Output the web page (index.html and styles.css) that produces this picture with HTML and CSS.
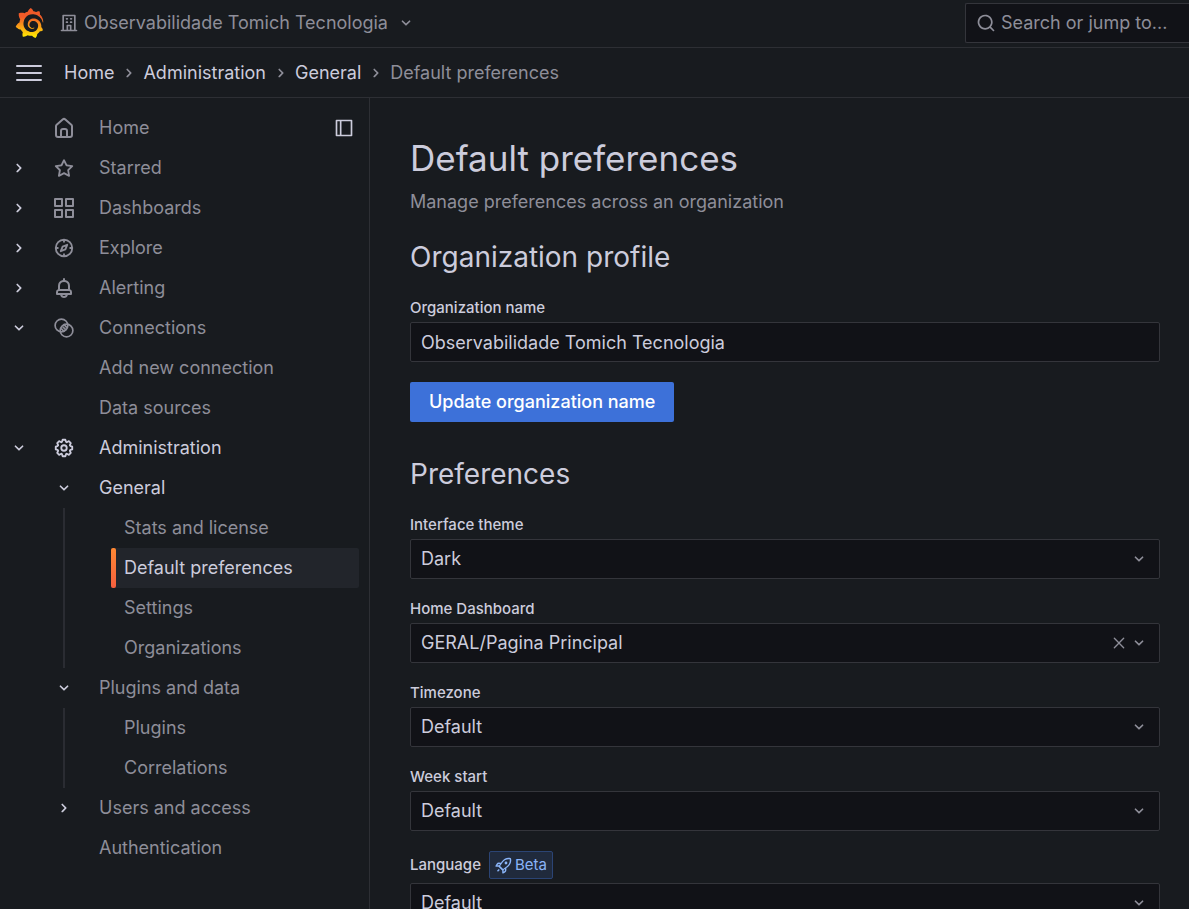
FILE: index.html
```html
<!DOCTYPE html>
<html lang="en">
<head>
<meta charset="utf-8">
<title>Default preferences - General - Administration - Grafana</title>
<link rel="stylesheet" href="styles.css">
</head>
<body>
<svg class="sprite" aria-hidden="true">
  <symbol id="right" viewBox="0 0 24 24"><path d="M14.83,11.29,10.59,7.05a1,1,0,0,0-1.42,0,1,1,0,0,0,0,1.41L12.71,12,9.17,15.54a1,1,0,0,0,0,1.41,1,1,0,0,0,.71.29,1,1,0,0,0,.71-.29l4.24-4.24A1,1,0,0,0,14.83,11.29Z"/></symbol>
  <symbol id="down" viewBox="0 0 24 24"><path d="M17,9.17a1,1,0,0,0-1.41,0L12,12.71,8.46,9.17a1,1,0,0,0-1.41,0,1,1,0,0,0,0,1.42l4.24,4.24a1,1,0,0,0,1.42,0L17,10.59A1,1,0,0,0,17,9.17Z"/></symbol>
</svg>

<header class="topbar">
  <a class="logo" href="#" aria-label="Grafana">
    <svg viewBox="0 0 351 365"><defs><linearGradient id="flame" x1="0" y1="1" x2="0" y2="0"><stop offset="0" stop-color="#fff100"/><stop offset=".3" stop-color="#fbb012"/><stop offset=".7" stop-color="#f05a28"/><stop offset="1" stop-color="#f05a28"/></linearGradient></defs><path fill="url(#flame)" d="M342,161.2c-0.6-6.1-1.6-13.1-3.6-20.9c-2-7.7-5-16.2-9.4-25c-4.4-8.8-10.1-17.9-17.5-26.8c-2.9-3.5-6.1-6.9-9.5-10.2c5.1-20.3-6.2-37.9-6.2-37.9c-19.5-1.2-31.9,6.1-36.5,9.4c-0.8-0.3-1.5-0.7-2.3-1c-3.3-1.3-6.7-2.6-10.3-3.7c-3.5-1.1-7.1-2.1-10.8-3c-3.7-0.9-7.4-1.6-11.2-2.2c-0.7-0.1-1.3-0.2-2-0.3c-8.5-27.2-32.9-38.6-32.9-38.6c-27.3,17.3-32.4,41.5-32.4,41.5s-0.1,0.5-0.3,1.4c-1.5,0.4-3,0.9-4.5,1.3c-2.1,0.6-4.2,1.4-6.2,2.2c-2.1,0.8-4.1,1.6-6.2,2.5c-4.1,1.8-8.2,3.8-12.2,6c-3.9,2.2-7.7,4.6-11.4,7.1c-0.5-0.2-1-0.4-1-0.4c-37.8-14.4-71.3,2.9-71.3,2.9c-3.1,40.2,15.1,65.5,18.7,70.1c-0.9,2.5-1.7,5-2.5,7.5c-2.8,9.1-4.9,18.4-6.2,28.1c-0.2,1.4-0.4,2.8-0.5,4.2C18.8,192.7,8.5,228,8.5,228c29.1,33.5,63.1,35.6,63.1,35.6c0,0,0.1-0.1,0.1-0.1c4.3,7.7,9.3,15,14.9,21.9c2.4,2.9,4.8,5.6,7.4,8.3c-10.6,30.4,1.5,55.6,1.5,55.6c32.4,1.2,53.7-14.2,58.2-17.7c3.2,1.1,6.5,2.1,9.8,2.9c10,2.6,20.2,4.1,30.4,4.5c2.5,0.1,5.1,0.2,7.6,0.1l1.2,0l0.8,0l1.6,0l1.6-0.1l0,0.1c15.3,21.8,42.1,24.9,42.1,24.9c19.1-20.1,20.2-40.1,20.2-44.4l0,0c0,0,0-0.1,0-0.3c0-0.4,0-0.6,0-0.6l0,0c0-0.3,0-0.6,0-0.9c4-2.8,7.8-5.8,11.4-9.1c7.6-6.9,14.3-14.8,19.9-23.3c0.5-0.8,1-1.6,1.5-2.4c21.6,1.2,36.9-13.4,36.9-13.4c-3.6-22.5-16.4-33.5-19.1-35.6l0,0c0,0-0.1-0.1-0.3-0.2c-0.2-0.1-0.2-0.2-0.2-0.2c0,0,0,0,0,0c-0.1-0.1-0.3-0.2-0.5-0.3c0.1-1.4,0.2-2.7,0.3-4.1c0.2-2.4,0.2-4.9,0.2-7.3l0-1.8l0-0.9l0-0.5c0-0.6,0-0.4,0-0.6l-0.1-1.5l-0.1-2c0-0.7-0.1-1.3-0.2-1.9c-0.1-0.6-0.1-1.3-0.2-1.9l-0.2-1.9l-0.3-1.9c-0.4-2.5-0.8-4.9-1.4-7.4c-2.3-9.7-6.1-18.9-11-27.2c-5-8.3-11.2-15.6-18.3-21.8c-7-6.2-14.9-11.2-23.1-14.9c-8.3-3.7-16.9-6.1-25.5-7.2c-4.3-0.6-8.6-0.8-12.9-0.7l-1.6,0l-0.4,0c-0.1,0-0.6,0-0.5,0l-0.7,0l-1.6,0.1c-0.6,0-1.2,0.1-1.7,0.1c-2.2,0.2-4.4,0.5-6.5,0.9c-8.6,1.6-16.7,4.7-23.8,9c-7.1,4.3-13.3,9.6-18.3,15.6c-5,6-8.9,12.7-11.6,19.6c-2.7,6.9-4.2,14.1-4.6,21c-0.1,1.7-0.1,3.5-0.1,5.2c0,0.4,0,0.9,0,1.3l0.1,1.4c0.1,0.8,0.1,1.7,0.2,2.5c0.3,3.5,1,6.9,1.9,10.1c1.9,6.5,4.9,12.4,8.6,17.4c3.7,5,8.2,9.1,12.9,12.4c4.7,3.2,9.8,5.5,14.8,7c5,1.5,10,2.1,14.7,2.1c0.6,0,1.2,0,1.7,0c0.3,0,0.6,0,0.9,0c0.3,0,0.6,0,0.9-0.1c0.5,0,1-0.1,1.5-0.1c0.1,0,0.3,0,0.4-0.1l0.5-0.1c0.3,0,0.6-0.1,0.9-0.1c0.6-0.1,1.1-0.2,1.7-0.3c0.6-0.1,1.1-0.2,1.6-0.4c1.1-0.2,2.1-0.6,3.1-0.9c2-0.7,4-1.5,5.7-2.4c1.8-0.9,3.4-2,5-3c0.4-0.3,0.9-0.6,1.3-1c1.6-1.3,1.9-3.7,0.6-5.3c-1.1-1.4-3.1-1.8-4.7-0.9c-0.4,0.2-0.8,0.4-1.2,0.6c-1.4,0.7-2.8,1.3-4.3,1.8c-1.5,0.5-3.1,0.9-4.7,1.2c-0.8,0.1-1.6,0.2-2.5,0.3c-0.4,0-0.8,0.1-1.3,0.1c-0.4,0-0.9,0-1.2,0c-0.4,0-0.8,0-1.2,0c-0.5,0-1,0-1.5-0.1c0,0-0.3,0-0.1,0l-0.2,0l-0.3,0c-0.2,0-0.5,0-0.7-0.1c-0.5-0.1-0.9-0.1-1.4-0.2c-3.7-0.5-7.4-1.6-10.9-3.2c-3.6-1.6-7-3.8-10.1-6.6c-3.1-2.8-5.8-6.1-7.9-9.9c-2.1-3.8-3.6-8-4.3-12.4c-0.3-2.2-0.5-4.5-0.4-6.7c0-0.6,0.1-1.2,0.1-1.8c0,0.2,0-0.1,0-0.1l0-0.2l0-0.5c0-0.3,0.1-0.6,0.1-0.9c0.1-1.2,0.3-2.4,0.5-3.6c1.7-9.6,6.5-19,13.9-26.1c1.9-1.8,3.9-3.4,6-4.9c2.1-1.5,4.4-2.8,6.8-3.9c2.4-1.1,4.8-2,7.4-2.7c2.5-0.7,5.1-1.1,7.8-1.4c1.3-0.1,2.6-0.2,4-0.2c0.4,0,0.6,0,0.9,0l1.1,0l0.7,0c0.3,0,0,0,0.1,0l0.3,0l1.1,0.1c2.9,0.2,5.7,0.6,8.5,1.3c5.6,1.2,11.1,3.3,16.2,6.1c10.2,5.7,18.9,14.5,24.2,25.1c2.7,5.3,4.6,11,5.5,16.9c0.2,1.5,0.4,3,0.5,4.5l0.1,1.1l0.1,1.1c0,0.4,0,0.8,0,1.1c0,0.4,0,0.8,0,1.1l0,1l0,1.1c0,0.7-0.1,1.9-0.1,2.6c-0.1,1.6-0.3,3.3-0.5,4.9c-0.2,1.6-0.5,3.2-0.8,4.8c-0.3,1.6-0.7,3.2-1.1,4.7c-0.8,3.1-1.8,6.2-3,9.3c-2.4,6-5.6,11.8-9.4,17.1c-7.7,10.6-18.2,19.2-30.2,24.7c-6,2.7-12.3,4.7-18.8,5.7c-3.2,0.6-6.5,0.9-9.8,1l-0.6,0l-0.5,0l-1.1,0l-1.6,0l-0.8,0c0.4,0-0.1,0-0.1,0l-0.3,0c-1.8,0-3.5-0.1-5.3-0.3c-7-0.5-13.9-1.8-20.7-3.7c-6.7-1.9-13.2-4.6-19.4-7.8c-12.3-6.6-23.4-15.6-32-26.5c-4.3-5.4-8.1-11.3-11.2-17.4c-3.1-6.1-5.6-12.6-7.4-19.1c-1.8-6.6-2.9-13.3-3.4-20.1l-0.1-1.3l0-0.3l0-0.3l0-0.6l0-1.1l0-0.3l0-0.4l0-0.8l0-1.6l0-0.3c0,0,0,0.1,0-0.1l0-0.6c0-0.8,0-1.7,0-2.5c0.1-3.3,0.4-6.8,0.8-10.2c0.4-3.4,1-6.9,1.7-10.3c0.7-3.4,1.5-6.8,2.5-10.2c1.9-6.7,4.3-13.2,7.1-19.3c5.7-12.2,13.1-23.1,22-31.8c2.2-2.2,4.5-4.2,6.9-6.2c2.4-1.9,4.9-3.7,7.5-5.4c2.5-1.7,5.2-3.2,7.9-4.6c1.3-0.7,2.7-1.4,4.1-2c0.7-0.3,1.4-0.6,2.1-0.9c0.7-0.3,1.4-0.6,2.1-0.9c2.8-1.2,5.7-2.2,8.7-3.1c0.7-0.2,1.5-0.4,2.2-0.7c0.7-0.2,1.5-0.4,2.2-0.6c1.5-0.4,3-0.8,4.5-1.1c0.7-0.2,1.5-0.3,2.3-0.5c0.8-0.2,1.5-0.3,2.3-0.5c0.8-0.1,1.5-0.3,2.3-0.4l1.1-0.2l1.2-0.2c0.8-0.1,1.5-0.2,2.3-0.3c0.9-0.1,1.7-0.2,2.6-0.3c0.7-0.1,1.9-0.2,2.6-0.3c0.5-0.1,1.1-0.1,1.6-0.2l1.1-0.1l0.5-0.1l0.6,0c0.9-0.1,1.7-0.1,2.6-0.2l1.3-0.1c0,0,0.5,0,0.1,0l0.3,0l0.6,0c0.7,0,1.5-0.1,2.2-0.1c2.9-0.1,5.9-0.1,8.8,0c5.8,0.2,11.5,0.9,17,1.9c11.1,2.1,21.5,5.6,31,10.3c9.5,4.6,17.9,10.3,25.3,16.5c0.5,0.4,0.9,0.8,1.4,1.2c0.4,0.4,0.9,0.8,1.3,1.2c0.9,0.8,1.7,1.6,2.6,2.4c0.9,0.8,1.7,1.6,2.5,2.4c0.8,0.8,1.6,1.6,2.4,2.5c3.1,3.3,6,6.6,8.6,10c5.2,6.7,9.4,13.5,12.7,19.9c0.2,0.4,0.4,0.8,0.6,1.2c0.2,0.4,0.4,0.8,0.6,1.2c0.4,0.8,0.8,1.6,1.1,2.4c0.4,0.8,0.7,1.5,1.1,2.3c0.3,0.8,0.7,1.5,1,2.3c1.2,3,2.4,5.9,3.3,8.6c1.5,4.4,2.6,8.3,3.5,11.7c0.3,1.4,1.6,2.3,3,2.1c1.5-0.1,2.6-1.3,2.6-2.8C342.6,170.4,342.5,166.1,342,161.2z"/></svg>
  </a>
  <button class="org" type="button">
    <svg class="icon" viewBox="0 0 24 24"><path d="M14,8h1a1,1,0,0,0,0-2H14a1,1,0,0,0,0,2Zm0,4h1a1,1,0,0,0,0-2H14a1,1,0,0,0,0,2ZM9,8h1a1,1,0,0,0,0-2H9A1,1,0,0,0,9,8Zm0,4h1a1,1,0,0,0,0-2H9a1,1,0,0,0,0,2Zm12,8H20V3a1,1,0,0,0-1-1H5A1,1,0,0,0,4,3V20H3a1,1,0,0,0,0,2H21a1,1,0,0,0,0-2Zm-8,0H11V16h2Zm5,0H15V15a1,1,0,0,0-1-1H10a1,1,0,0,0-1,1v5H6V4H18Z"/></svg>
    <span class="org-name">Observabilidade Tomich Tecnologia</span>
    <svg class="icon"><use href="#down"/></svg>
  </button>
  <label class="search">
    <svg class="icon" viewBox="0 0 24 24"><path d="M21.71,20.29,18,16.61A9,9,0,1,0,16.61,18l3.68,3.68a1,1,0,0,0,1.42,0A1,1,0,0,0,21.71,20.29ZM11,18a7,7,0,1,1,7-7A7,7,0,0,1,11,18Z"/></svg>
    <input type="search" placeholder="Search or jump to..." aria-label="Search or jump to">
  </label>
</header>

<div class="crumbbar">
  <button class="menu" type="button" aria-label="Toggle menu"><svg viewBox="0 0 26 16"><path d="M1 1h24M1 8h24M1 15h24"/></svg></button>
  <nav class="crumbs" aria-label="Breadcrumbs">
    <a href="#">Home</a><svg class="icon"><use href="#right"/></svg>
    <a href="#">Administration</a><svg class="icon"><use href="#right"/></svg>
    <a href="#">General</a><svg class="icon"><use href="#right"/></svg>
    <span class="here">Default preferences</span>
  </nav>
</div>

<div class="body">
  <nav class="side" aria-label="Navigation">
    <div class="row">
      <span class="cell"></span>
      <span class="cell glyph"><svg class="icon" viewBox="1 1 22 22"><path d="M20,8h0L14,2.74a3,3,0,0,0-4,0L4,8a3,3,0,0,0-1,2.26V19a3,3,0,0,0,3,3H18a3,3,0,0,0,3-3V10.25A3,3,0,0,0,20,8ZM14,20H10V15a1,1,0,0,1,1-1h2a1,1,0,0,1,1,1Zm5-1a1,1,0,0,1-1,1H16V15a3,3,0,0,0-3-3H11a3,3,0,0,0-3,3v5H6a1,1,0,0,1-1-1V10.25a1,1,0,0,1,.34-.75l6-5.25a1,1,0,0,1,1.32,0l6,5.25a1,1,0,0,1,.34.75Z"/></svg></span>
      <a href="#">Home</a>
      <button class="dock" type="button" aria-label="Undock menu"><svg class="icon" viewBox="0 0 24 24"><path d="M21,2H3A1,1,0,0,0,2,3V21a1,1,0,0,0,1,1H21a1,1,0,0,0,1-1V3A1,1,0,0,0,21,2ZM7,20H4V4H7Zm13,0H9V4H20Z"/></svg></button>
    </div>
    <div class="row">
      <button class="cell" type="button" aria-label="Expand Starred"><svg class="icon"><use href="#right"/></svg></button>
      <span class="cell glyph"><svg class="icon" viewBox="0 0 24 24"><path d="M22,9.67A1,1,0,0,0,21.14,9l-5.69-.83L12.9,3a1,1,0,0,0-1.8,0L8.55,8.16,2.86,9a1,1,0,0,0-.81.68,1,1,0,0,0,.25,1l4.13,4-1,5.68A1,1,0,0,0,6.9,21.44L12,18.77l5.1,2.67a.93.93,0,0,0,.46.12,1,1,0,0,0,.59-.19,1,1,0,0,0,.4-1l-1-5.68,4.13-4A1,1,0,0,0,22,9.67Zm-6.15,4a1,1,0,0,0-.29.88l.72,4.2-3.76-2a1.06,1.06,0,0,0-.94,0l-3.76,2,.72-4.2a1,1,0,0,0-.29-.88l-3-3,4.21-.61a1,1,0,0,0,.76-.55L12,5.7l1.88,3.82a1,1,0,0,0,.76.55l4.21.61Z"/></svg></span>
      <a href="#">Starred</a>
    </div>
    <div class="row">
      <button class="cell" type="button" aria-label="Expand Dashboards"><svg class="icon"><use href="#right"/></svg></button>
      <span class="cell glyph"><svg class="icon" viewBox="1 1 22 22"><path class="line" d="M3 3h7v7H3zM14 3h7v7h-7zM3 14h7v7H3zM14 14h7v7h-7z"/></svg></span>
      <a href="#">Dashboards</a>
    </div>
    <div class="row">
      <button class="cell" type="button" aria-label="Expand Explore"><svg class="icon"><use href="#right"/></svg></button>
      <span class="cell glyph"><svg class="icon" viewBox="0 0 24 24"><circle class="line" cx="12" cy="12" r="9"/><path class="line" d="M12 3v3M12 18v3M3 12h3M18 12h3M15.500 8.500l-2 5-5 2 2-5z"/></svg></span>
      <a href="#">Explore</a>
    </div>
    <div class="row">
      <button class="cell" type="button" aria-label="Expand Alerting"><svg class="icon"><use href="#right"/></svg></button>
      <span class="cell glyph"><svg class="icon" viewBox="1 1 22 22"><path d="M18,13.18V10a6,6,0,0,0-5-5.91V3a1,1,0,0,0-2,0V4.09A6,6,0,0,0,6,10v3.180A3,3,0,0,0,4,16v2a1,1,0,0,0,1,1H8.140a4,4,0,0,0,7.720,0H19a1,1,0,0,0,1-1V16A3,3,0,0,0,18,13.180ZM8,10a4,4,0,0,1,8,0v3H8Zm4,10a2,2,0,0,1-1.720-1h3.440A2,2,0,0,1,12,20Zm6-3H6V16a1,1,0,0,1,1-1H17a1,1,0,0,1,1,1Z"/></svg></span>
      <a href="#">Alerting</a>
    </div>
    <div class="row">
      <button class="cell" type="button" aria-label="Collapse Connections"><svg class="icon"><use href="#down"/></svg></button>
      <span class="cell glyph"><svg class="icon" viewBox="-1 -1 26 26"><circle class="line" cx="9" cy="9" r="7.500"/><circle class="line" cx="15" cy="15" r="7.500"/><path class="line" d="M8.500 12.500l4 4M10.500 10.500l3.500 3.500M11.500 7.500l4 4"/></svg></span>
      <a href="#">Connections</a>
    </div>
    <div class="row sub"><a href="#">Add new connection</a></div>
    <div class="row sub"><a href="#">Data sources</a></div>
    <div class="row open">
      <button class="cell" type="button" aria-label="Collapse Administration"><svg class="icon"><use href="#down"/></svg></button>
      <span class="cell glyph"><svg class="icon" viewBox="0 0 24 24"><path d="M21.32,9.55l-1.89-.63.89-1.78A1,1,0,0,0,20.13,6L18,3.87a1,1,0,0,0-1.15-.19l-1.78.89-.63-1.89A1,1,0,0,0,13.5,2h-3a1,1,0,0,0-.95.68L8.92,4.57,7.14,3.68A1,1,0,0,0,6,3.87L3.87,6a1,1,0,0,0-.19,1.15l.89,1.78-1.89.63A1,1,0,0,0,2,10.5v3a1,1,0,0,0,.68.95l1.89.63-.89,1.78A1,1,0,0,0,3.87,18L6,20.13a1,1,0,0,0,1.15.19l1.78-.89.63,1.89a1,1,0,0,0,.95.68h3a1,1,0,0,0,.95-.68l.63-1.89,1.78.89A1,1,0,0,0,18,20.13L20.13,18a1,1,0,0,0,.19-1.15l-.89-1.78,1.89-.63A1,1,0,0,0,22,13.5v-3A1,1,0,0,0,21.32,9.55ZM20,12.78l-1.2.4A2,2,0,0,0,17.64,16l.57,1.14-1.1,1.1L16,17.64a2,2,0,0,0-2.79,1.16l-.4,1.2H11.22l-.4-1.2A2,2,0,0,0,8,17.64l-1.14.57-1.1-1.1L6.36,16A2,2,0,0,0,5.2,13.18L4,12.78V11.22l1.2-.4A2,2,0,0,0,6.36,8L5.79,6.89l1.1-1.1L8,6.36A2,2,0,0,0,10.82,5.2l.4-1.2h1.56l.4,1.2A2,2,0,0,0,16,6.36l1.14-.57,1.1,1.1L17.64,8a2,2,0,0,0,1.16,2.79l1.2.4ZM12,8a4,4,0,1,0,4,4A4,4,0,0,0,12,8Zm0,6a2,2,0,1,1,2-2A2,2,0,0,1,12,14Z"/></svg></span>
      <a href="#">Administration</a>
    </div>
    <div class="row nested open">
      <button class="cell" type="button" aria-label="Collapse General"><svg class="icon"><use href="#down"/></svg></button>
      <a href="#">General</a>
    </div>
    <div class="branch">
      <a href="#">Stats and license</a>
      <a class="active" href="#" aria-current="page">Default preferences</a>
      <a href="#">Settings</a>
      <a href="#">Organizations</a>
    </div>
    <div class="row nested">
      <button class="cell" type="button" aria-label="Collapse Plugins and data"><svg class="icon"><use href="#down"/></svg></button>
      <a href="#">Plugins and data</a>
    </div>
    <div class="branch">
      <a href="#">Plugins</a>
      <a href="#">Correlations</a>
    </div>
    <div class="row nested">
      <button class="cell" type="button" aria-label="Expand Users and access"><svg class="icon"><use href="#right"/></svg></button>
      <a href="#">Users and access</a>
    </div>
    <div class="row sub"><a href="#">Authentication</a></div>
  </nav>

  <main class="page">
    <h1>Default preferences</h1>
    <p class="lead">Manage preferences across an organization</p>

    <form class="group">
      <h2>Organization profile</h2>
      <div class="field">
        <label for="org-name">Organization name</label>
        <input class="box" id="org-name" type="text" value="Observabilidade Tomich Tecnologia">
      </div>
      <button class="primary" type="submit">Update organization name</button>
    </form>

    <form class="group">
      <h2>Preferences</h2>
      <div class="field">
        <label for="theme">Interface theme</label>
        <div class="box"><select id="theme"><option>Dark</option></select><svg class="icon"><use href="#down"/></svg></div>
      </div>
      <div class="field">
        <label for="dash">Home Dashboard</label>
        <div class="box"><select id="dash"><option>GERAL/Pagina Principal</option></select><button class="clear" type="button" aria-label="Clear value"><svg class="icon" viewBox="0 0 24 24"><path d="M13.41,12l6.3-6.29a1,1,0,1,0-1.42-1.42L12,10.590,5.710,4.290A1,1,0,0,0,4.290,5.710L10.590,12l-6.300,6.290a1,1,0,0,0,1.420,1.420L12,13.410l6.290,6.300a1,1,0,0,0,1.420-1.420Z"/></svg></button><svg class="icon"><use href="#down"/></svg></div>
      </div>
      <div class="field">
        <label for="tz">Timezone</label>
        <div class="box"><select id="tz"><option>Default</option></select><svg class="icon"><use href="#down"/></svg></div>
      </div>
      <div class="field">
        <label for="week">Week start</label>
        <div class="box"><select id="week"><option>Default</option></select><svg class="icon"><use href="#down"/></svg></div>
      </div>
      <div class="field">
        <div class="label-row">
          <label for="lang">Language</label>
          <span class="badge"><svg viewBox="0 0 24 24"><path d="M22.600 2.100a1 1 0 0 0-.700-.700C16.900.200 12.600 2.300 9.600 6.200L8.400 8 5.500 7.900a4 4 0 0 0-3.400 1.900L.700 12.300a1 1 0 0 0 .900 1.500h3.300l5.300 5.300v3.300a1 1 0 0 0 1.500.900l2.500-1.400a4 4 0 0 0 1.900-3.400l-.1-2.900 1.800-1.200c3.900-3 6-7.300 4.800-12.300zM3.300 11.800l.6-1a2 2 0 0 1 1.700-.9l1.500.1-1.300 1.800zm10.800 6.600a2 2 0 0 1-.9 1.700l-1 .6v-2.500l1.800-1.300zm2.600-5.400-5.300 3.800-4.200-4.200L11 7.300c2.300-3.100 5.700-4.600 9.800-4.100.4 4.100-1 7.500-4.100 9.800z"/><circle cx="15.500" cy="8.500" r="2"/><path class="line" d="M6 17.500L3.500 20"/></svg>Beta</span>
        </div>
        <div class="box"><select id="lang"><option>Default</option></select><svg class="icon"><use href="#down"/></svg></div>
      </div>
    </form>
  </main>
</div>
</body>
</html>
```
FILE: styles.css
```css
* { box-sizing: border-box; }

body {
  margin: 0;
  height: 100vh;
  display: flex;
  flex-direction: column;
  overflow: hidden;
  background: #181b1f;
  color: #ccccdc;
  font: 400 18px/28px Inter, sans-serif;
}

a { color: inherit; text-decoration: none; }

button, input, select {
  margin: 0;
  padding: 0;
  border: 0;
  background: none;
  color: inherit;
  font: inherit;
}

h1, h2, p { margin: 0; font-weight: 400; }

.sprite { display: none; }
.icon { width: 20px; height: 20px; flex: none; fill: currentColor; }
.line { fill: none; stroke: currentColor; stroke-width: 2; stroke-linejoin: round; }

/* Top bar */
.topbar {
  display: flex;
  align-items: center;
  flex: none;
  height: 48px;
  padding: 0 0 1px 15px;
  border-bottom: 1px solid #2d2f34;
  color: #8e8e99;
}

.logo { display: flex; }
.logo svg { width: 29px; height: 30px; }

.org { display: flex; align-items: center; margin-left: 15px; }
.org-name { margin: 0 8px 0 5px; }

.search {
  display: flex;
  align-items: center;
  gap: 5px;
  width: 224px;
  height: 40px;
  margin-left: auto;
  padding-left: 10px;
  border: 1px solid #34353b;
  border-right: 0;
  border-radius: 2px 0 0 2px;
  background: #111217;
}
.search input { flex: 1; min-width: 0; outline: 0; }
.search input::placeholder { color: #8e8e99; opacity: 1; }

/* Breadcrumbs */
.crumbbar {
  display: flex;
  align-items: center;
  flex: none;
  gap: 22px;
  height: 50px;
  padding-left: 16px;
  border-bottom: 1px solid #2d2f34;
}
.menu { display: flex; }
.menu svg { width: 26px; height: 16px; stroke: #ccccdc; stroke-width: 2; stroke-linecap: round; }
.crumbs { display: flex; align-items: center; gap: 5px; }
.crumbs .icon { margin-right: -1px; }
.crumbs .icon, .here { color: #8e8e99; }

/* Side navigation */
.body { display: flex; flex: 1; min-height: 0; }

.side {
  flex: none;
  width: 370px;
  padding: 10px 10px 10px 0;
  border-right: 1px solid #2d2f34;
  color: #8e8e99;
  overflow: hidden;
}
.row { display: flex; align-items: center; height: 40px; }
.cell {
  display: flex;
  justify-content: center;
  flex: none;
  width: 38px;
  color: #ccccdc;
}
.glyph { width: 52px; margin-right: 9px; color: inherit; }
.glyph .icon { width: 22px; height: 22px; }
.dock { display: flex; margin-left: auto; margin-right: 5px; color: #ccccdc; }
.sub { padding-left: 99px; }
.nested { padding-left: 45px; }
.nested .cell { margin-right: 16px; }
.open { color: #ccccdc; }

.branch { margin-left: 63px; border-left: 2px solid #2a2c32; }
.branch a {
  display: flex;
  align-items: center;
  height: 40px;
  margin-left: 46px;
  padding-left: 13px;
}
.branch .active {
  position: relative;
  border-radius: 2px;
  background: #22252b;
  color: #ccccdc;
}
.active::before {
  content: "";
  position: absolute;
  left: 0;
  top: 0;
  bottom: 0;
  width: 5px;
  border-radius: 2px;
  background: linear-gradient(#ff8833, #f55f3e);
}

/* Page content */
.page {
  flex: 1;
  min-width: 0;
  padding: 38px 29px 40px 40px;
  overflow-y: auto;
  scrollbar-width: none;
}
h1 { font-size: 35px; line-height: 44px; }
.lead { margin-top: 8px; color: #8e8e99; }
h2 { margin-bottom: 5px; font-size: 28px; line-height: 32px; }

.group { display: flex; flex-direction: column; gap: 20px; margin-top: 25px; }
.group + .group { margin-top: 36px; }

.field { display: flex; flex-direction: column; gap: 4px; }
.field label { font-size: 15px; line-height: 20px; font-weight: 500; }

.box {
  display: flex;
  align-items: center;
  width: 100%;
  height: 40px;
  padding: 0 10px;
  border: 1px solid #34353b;
  border-radius: 2px;
  background: #111217;
}
.box select { flex: 1; min-width: 0; height: 38px; appearance: none; }
.box .icon { color: #8e8e99; }
.clear { display: flex; padding: 0 2px; }
.clear .icon { width: 16px; height: 16px; }

.primary {
  align-self: flex-start;
  height: 40px;
  padding: 0 19px;
  border-radius: 2px;
  background: #3d71d9;
  color: #fff;
  font-weight: 500;
}

.label-row { display: flex; align-items: center; gap: 8px; height: 28px; }
.badge {
  display: flex;
  align-items: center;
  gap: 3px;
  padding: 2px 5px;
  border: 1px solid #2b4474;
  border-radius: 2px;
  background: #202a3c;
  color: #8ab4f8;
  font-size: 15px;
  line-height: 22px;
}
.badge svg { width: 17px; height: 17px; fill: currentColor; }
.badge .line { fill: none; }
```
